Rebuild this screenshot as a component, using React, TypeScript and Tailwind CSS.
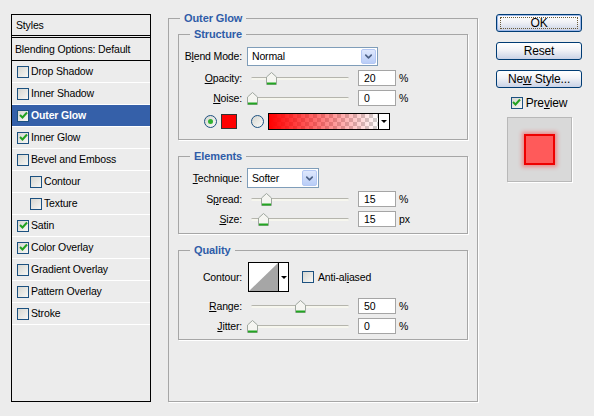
import { ChevronDown } from "lucide-react";
import clsx from "clsx";
import type { ReactNode } from "react";

type StyleItem = {
  label: string;
  checked?: boolean;
  indent?: boolean;
  active?: boolean;
};

const styleItems: StyleItem[] = [
  { label: "Drop Shadow" },
  { label: "Inner Shadow" },
  { label: "Outer Glow", checked: true, active: true },
  { label: "Inner Glow", checked: true },
  { label: "Bevel and Emboss" },
  { label: "Contour", indent: true },
  { label: "Texture", indent: true },
  { label: "Satin", checked: true },
  { label: "Color Overlay", checked: true },
  { label: "Gradient Overlay" },
  { label: "Pattern Overlay" },
  { label: "Stroke" },
];

function Tick() {
  return (
    <svg width="9" height="9" viewBox="0 0 9 9">
      <path d="M1 4 L3.5 6.5 L8 1.5" fill="none" stroke="#21a121" strokeWidth="2" />
    </svg>
  );
}

function CheckBox({ checked }: { checked?: boolean }) {
  return (
    <span className="flex h-[12px] w-[12px] shrink-0 items-center justify-center border border-[#1c5180] bg-[linear-gradient(135deg,#d6d6d0,#f7f7f5)]">
      {checked && <Tick />}
    </span>
  );
}

function Radio({ checked }: { checked?: boolean }) {
  return (
    <span className="flex h-[13px] w-[13px] shrink-0 items-center justify-center rounded-full border border-[#1c5180] bg-[linear-gradient(135deg,#d6d6d0,#fafaf8)]">
      {checked && <span className="h-[5px] w-[5px] rounded-full bg-[#31b131]" />}
    </span>
  );
}

function Group({
  title,
  className,
  children,
}: {
  title: string;
  className?: string;
  children: ReactNode;
}) {
  return (
    <fieldset
      className={clsx(
        "border border-[#a6a6a6] shadow-[1px_1px_0_#fff]",
        className
      )}
    >
      <legend className="ml-[11px] bg-[#ececec] px-[4px] text-[11px] font-bold leading-[14px] tracking-[-0.1px] text-[#2f5ca8]">
        {title}
      </legend>
      {children}
    </fieldset>
  );
}

function Label({ children }: { children: ReactNode }) {
  return <span className="w-[63px] shrink-0 text-right">{children}</span>;
}

function Select({ value, width }: { value: string; width: string }) {
  return (
    <div
      className={clsx(
        "ml-[5px] flex h-full items-stretch border border-[#7f9db9] bg-white",
        width
      )}
    >
      <span className="flex flex-1 items-center pl-[4px]">{value}</span>
      <span className="m-[1px] flex w-[15px] items-center justify-center rounded-[2px] border border-[#b4c8f4] bg-[linear-gradient(#dfe8fd,#b9cdf7)]">
        <ChevronDown size={11} strokeWidth={3.5} color="#4d6185" />
      </span>
    </div>
  );
}

function Thumb() {
  return (
    <svg width="11" height="13" viewBox="0 0 11 13">
      <path
        d="M0.5 5 L5.5 0.5 L10.5 5 L10.5 12.5 L0.5 12.5 Z"
        fill="#f5f5f1"
        stroke="#9fa79f"
      />
      <rect x="1" y="10.5" width="9" height="2" fill="#22a522" />
    </svg>
  );
}

function SliderRow({
  label,
  value,
  unit,
  thumb,
}: {
  label: ReactNode;
  value: string;
  unit: string;
  thumb: number;
}) {
  return (
    <div className="flex h-[16px] items-center">
      <Label>{label}</Label>
      <div className="relative ml-[5px] h-[16px] w-[106px]">
        <div className="absolute left-[4px] right-[4px] top-[7px] h-[3px] rounded-full border-t border-[#b5b5ad] bg-[#f6f6ee]" />
        <div className="absolute top-[2px]" style={{ left: thumb }}>
          <Thumb />
        </div>
      </div>
      <div className="ml-[5px] flex h-[16px] w-[38px] items-center border border-[#a5a5a5] bg-white pl-[5px]">
        {value}
      </div>
      <span className="ml-[3px]">{unit}</span>
    </div>
  );
}

function XpButton({ children, primary }: { children: ReactNode; primary?: boolean }) {
  return (
    <button
      type="button"
      className={clsx(
        "flex h-[18px] w-[86px] items-center justify-center rounded-[3px] border border-[#003c74] bg-[linear-gradient(#ffffff,#f1f2f6_45%,#c9d2e6)] text-[12px] leading-none text-black",
        primary && "shadow-[inset_0_0_0_1px_#9db8e8]"
      )}
    >
      <span
        className={clsx(
          "flex h-[12px] w-[78px] items-center justify-center",
          primary && "border border-dotted border-[#6a5a3a]"
        )}
      >
        <span>{children}</span>
      </span>
    </button>
  );
}

export default function App() {
  return (
    <div className="flex h-[416px] w-[594px] items-start bg-[#ececec] font-['Liberation_Sans',Arial,sans-serif] text-[10.5px] leading-none tracking-[-0.15px] text-black">
      {/* lista stili */}
      <div className="ml-[11px] mt-[14px] flex h-[388px] w-[140px] flex-col border border-black">
        <div className="flex h-[21px] items-center border-b border-black pl-[4px]">Styles</div>
        <div className="mt-[1px] flex h-[24px] items-center border-y border-black pl-[3px]">
          Blending Options: Default
        </div>
        {styleItems.map((item) => (
          <div
            key={item.label}
            className={clsx(
              "flex h-[22px] items-center border-b border-white",
              item.indent ? "pl-[18px]" : "pl-[5px]",
              item.active && "bg-[#3560a9] font-bold text-white"
            )}
          >
            <CheckBox checked={item.checked} />
            <span className="ml-[2px]">{item.label}</span>
          </div>
        ))}
      </div>

      {/* pannello centrale */}
      <Group title="Outer Glow" className="ml-[17px] mt-[11px] h-[391px] w-[310px]">
        <div className="flex flex-col px-[9px] pt-[2px]">
          <Group title="Structure" className="h-[113px] w-[290px]">
            <div className="mt-[6px] flex h-[19px] items-center">
              <Label>
                B<u>l</u>end Mode:
              </Label>
              <Select value="Normal" width="w-[131px]" />
            </div>
            <div className="mt-[4px]">
              <SliderRow
                label={
                  <>
                    <u>O</u>pacity:
                  </>
                }
                value="20"
                unit="%"
                thumb={19}
              />
            </div>
            <div className="mt-[4px]">
              <SliderRow
                label={
                  <>
                    <u>N</u>oise:
                  </>
                }
                value="0"
                unit="%"
                thumb={0}
              />
            </div>
            <div className="mt-[7px] flex h-[17px] items-center pl-[25px]">
              <Radio checked />
              <span className="ml-[4px] h-[15px] w-[16px] border border-[#333] bg-[#ff0000]" />
              <span className="ml-[14px]">
                <Radio />
              </span>
              <div className="ml-[4px] flex h-[17px] w-[122px] border border-black">
                <span className="flex-1 bg-[linear-gradient(to_right,#ff0000,rgba(255,0,0,0.5)_50%,rgba(255,0,0,0)),repeating-conic-gradient(#cfcfcf_0_25%,#ffffff_0_50%)] bg-[length:100%_100%,8px_8px]" />
                <span className="flex w-[11px] items-center justify-center border-l border-black bg-white">
                  <span className="h-0 w-0 border-x-[3px] border-t-[3px] border-x-transparent border-t-black" />
                </span>
              </div>
            </div>
          </Group>

          <Group title="Elements" className="mt-[9px] h-[85px] w-[290px]">
            <div className="mt-[5px] flex h-[20px] items-center">
              <Label>
                <u>T</u>echnique:
              </Label>
              <Select value="Softer" width="w-[72px]" />
            </div>
            <div className="mt-[3px]">
              <SliderRow
                label={
                  <>
                    S<u>p</u>read:
                  </>
                }
                value="15"
                unit="%"
                thumb={14}
              />
            </div>
            <div className="mt-[4px]">
              <SliderRow
                label={
                  <>
                    <u>S</u>ize:
                  </>
                }
                value="15"
                unit="px"
                thumb={11}
              />
            </div>
          </Group>

          <Group title="Quality" className="mt-[9px] h-[97px] w-[290px]">
            <div className="mt-[5px] flex h-[30px] items-center">
              <Label>Contour:</Label>
              <div className="ml-[6px] flex h-[30px] w-[41px] border border-black bg-white">
                <svg width="29" height="28" viewBox="0 0 29 28" className="shrink-0">
                  <path d="M0 28 L29 0 L29 28 Z" fill="#a6a6a6" />
                </svg>
                <span className="flex flex-1 items-center justify-center border-l border-black">
                  <span className="h-0 w-0 border-x-[3px] border-t-[3px] border-x-transparent border-t-black" />
                </span>
              </div>
              <span className="ml-[13px]">
                <CheckBox />
              </span>
              <span className="ml-[4px]">
                Anti-al<u>i</u>ased
              </span>
            </div>
            <div className="mt-[6px]">
              <SliderRow
                label={
                  <>
                    <u>R</u>ange:
                  </>
                }
                value="50"
                unit="%"
                thumb={48}
              />
            </div>
            <div className="mt-[4px]">
              <SliderRow
                label={
                  <>
                    <u>J</u>itter:
                  </>
                }
                value="0"
                unit="%"
                thumb={0}
              />
            </div>
          </Group>
        </div>
      </Group>

      {/* pulsanti */}
      <div className="ml-[18px] mt-[14px] flex w-[86px] flex-col items-center">
        <XpButton primary>OK</XpButton>
        <div className="mt-[10px]">
          <XpButton>Reset</XpButton>
        </div>
        <div className="mt-[10px]">
          <XpButton>
            Ne<u>w</u> Style...
          </XpButton>
        </div>
        <div className="mt-[8px] flex h-[13px] items-center text-[12px]">
          <CheckBox checked />
          <span className="ml-[3px]">
            Pre<u>v</u>iew
          </span>
        </div>
        <div className="mt-[8px] flex h-[65px] w-[65px] items-center justify-center border border-[#b8b8b8] bg-[#d9d9d9] shadow-[1px_1px_0_#fff]">
          <div className="h-[31px] w-[31px] border-2 border-[#ee0000] bg-[#ff5a5a] shadow-[0_0_4px_2px_rgba(255,40,40,0.45)]" />
        </div>
      </div>
    </div>
  );
}
